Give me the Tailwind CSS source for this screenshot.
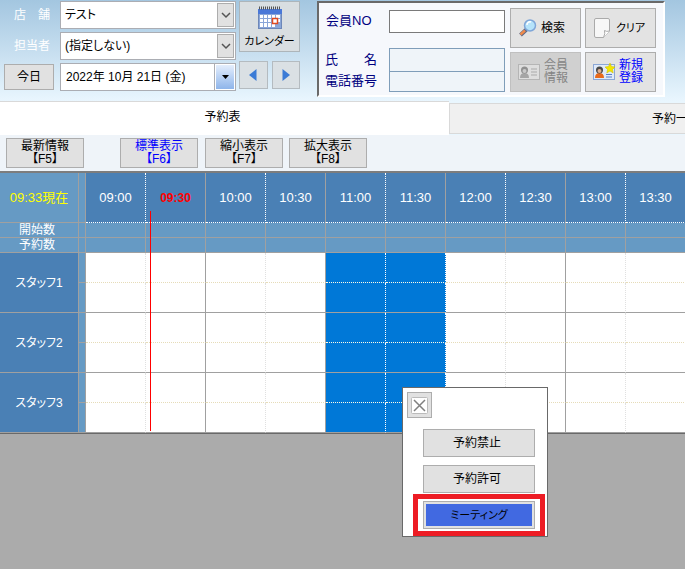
<!DOCTYPE html>
<html lang="ja">
<head>
<meta charset="utf-8">
<title>予約表</title>
<script src="https://cdn.jsdelivr.net/npm/@tailwindcss/browser@4"></script>
</head>
<body class="min-h-screen overflow-hidden bg-[#ababab] font-['Liberation_Sans','Noto_Sans_CJK_JP',sans-serif] text-xs text-black [font-feature-settings:'palt']">

<header class="flex h-[101px] items-start bg-linear-to-b from-[#a3c6e0] to-[#e9f6fe] pt-px">
  <div class="grid shrink-0 grid-cols-[50px_176px] gap-x-1.5 gap-y-[3px] pl-1">
    <label for="shop" class="self-center pl-2.5 text-white">店　舗</label>
    <div class="relative">
      <select id="shop" class="h-7 w-full appearance-none border border-[#abadb3] bg-white px-1 text-xs"><option>テスト</option></select>
      <span class="pointer-events-none absolute top-0.5 right-0.5 flex h-6 w-[17px] items-center justify-center border border-[#adadad] bg-[#e1e1e1]"><svg class="size-2.5" viewBox="0 0 10 10" fill="none" stroke="#555" stroke-width="1.500"><path d="M1 3l4 4 4-4"/></svg></span>
    </div>
    <label for="staff" class="self-center pl-2.5 text-white">担当者</label>
    <div class="relative">
      <select id="staff" class="h-7 w-full appearance-none border border-[#abadb3] bg-white px-1 text-xs"><option>(指定しない)</option></select>
      <span class="pointer-events-none absolute top-0.5 right-0.5 flex h-6 w-[17px] items-center justify-center border border-[#adadad] bg-[#e1e1e1]"><svg class="size-2.5" viewBox="0 0 10 10" fill="none" stroke="#555" stroke-width="1.500"><path d="M1 3l4 4 4-4"/></svg></span>
    </div>
    <button class="h-[26px] self-center border border-[#adadad] bg-[#e1e1e1]">今日</button>
    <div class="flex h-7">
      <input aria-label="日付" value="2022年 10月 21日 (金)" class="min-w-0 flex-1 border border-[#abadb3] bg-white px-[5px] text-xs">
      <button aria-label="日付を選択" class="flex w-[21px] border border-l-0 border-[#abadb3] bg-white p-px"><span class="flex h-full w-full items-center justify-center bg-linear-to-b from-[#e4eefc] to-[#8fb5ea]"><svg class="h-1 w-[7px]" viewBox="0 0 7 4"><path d="M0 0h7L3.500 4z"/></svg></span></button>
    </div>
  </div>

  <div class="ml-[3px] grid shrink-0 grid-cols-2 gap-x-1 gap-y-[9px]">
    <button class="col-span-2 flex h-[51px] w-[61px] flex-col items-center justify-between border border-[#adb5ba] bg-[#d9dee1] pt-1 pb-0.5">
      <svg class="h-6 w-[26px]" viewBox="0 0 26 24"><rect x="1" y="3" width="24" height="20" fill="#6d87b8"/><rect x="1" y="3" width="24" height="5" fill="#4a78d8"/><rect x="2" y="8" width="22" height="14" fill="#8aa6d8"/><g fill="#fff"><path d="M3 9h3v3H3zM7 9h3v3H7zM11 9h3v3h-3zM15 9h3v3h-3zM19 9h4v3h-4zM3 13h3v3H3zM7 13h3v3H7zM11 13h3v3h-3zM15 13h3v3h-3zM19 13h4v3h-4zM3 17h3v4H3zM7 17h3v4H7zM11 17h3v4h-3zM15 17h3v4h-3z"/></g><path d="M2 2h22" stroke="#555" stroke-width="3" stroke-dasharray="1 1"/><rect x="15.500" y="12.500" width="5" height="5" fill="#fff" stroke="#e04a20" stroke-width="1.500"/></svg>
      <span class="text-[11px] leading-4">カレンダー</span>
    </button>
    <button aria-label="前日" class="flex h-7 items-center justify-center border border-[#b4bbc0] bg-[#dae0e4]"><svg class="h-3 w-2" viewBox="0 0 8 12"><path d="M7.500 0v12L0 6z" fill="#3b7bd6"/></svg></button>
    <button aria-label="翌日" class="flex h-7 items-center justify-center border border-[#b4bbc0] bg-[#dae0e4]"><svg class="h-3 w-2" viewBox="0 0 8 12"><path d="M.500 0v12L8 6z" fill="#3b7bd6"/></svg></button>
  </div>

  <section class="ml-[17px] flex h-24 shrink-0 gap-[5px] border-2 border-t-[#696969] border-r-white border-b-white border-l-[#696969] bg-[#f6f8fc] pt-[5px] pr-[7px] pl-1.5 text-[13px] text-[#000080]">
    <div class="grid grid-cols-[64px_116px] grid-rows-[23px_39px_20px] content-start pt-0.5">
      <label for="no" class="pl-px leading-[22px]">会員NO</label>
      <input id="no" class="min-w-0 border border-[#7a7a7a] bg-white px-1">
      <label for="name" class="self-end leading-6">氏　　名</label>
      <input id="name" readonly class="h-6 min-w-0 self-end border border-[#7f9db9] bg-[#eff4f9] px-1">
      <label for="tel" class="leading-[18px]">電話番号</label>
      <input id="tel" readonly class="min-w-0 border border-t-0 border-[#7f9db9] bg-[#eff4f9] px-1">
    </div>
    <div class="grid grid-cols-[71px_71px] grid-rows-[40px_40px] content-start gap-x-1 gap-y-1 text-xs">
      <button class="flex items-center gap-1 border border-[#adadad] bg-[#e3e3e3] pl-2 text-black">
        <svg class="size-[18px]" viewBox="0 0 18 18"><path d="M1.500 16L8 10" stroke="#5b6684" stroke-width="4"/><path d="M1.500 15.500L6 11.500" stroke="#f08a4b" stroke-width="2.500"/><circle cx="11" cy="6.500" r="5.500" fill="#b5e3fa" stroke="#7fa6d8" stroke-width="1.500"/><path d="M8 6a3 3 0 0 1 4-3" stroke="#fff" stroke-width="1.500" fill="none"/></svg>検索
      </button>
      <button class="flex items-center gap-1.5 border border-[#adadad] bg-[#e3e3e3] pl-2 text-[11px] text-black">
        <svg class="h-5 w-4" viewBox="0 0 16 20"><path d="M2 .500h12q1.500 0 1.500 1.500v11l-6 6.500H2Q.500 19.500.500 18V2Q.500.500 2 .500z" fill="#f7f7f7" stroke="#aaa"/><path d="M15.500 13q-3 1-5-.500 1 3-1 7" fill="#fff" stroke="#aaa"/></svg>クリア
      </button>
      <button disabled class="flex items-center gap-1 border border-[#c0c0c0] bg-[#d0d0d0] pl-[7px] leading-[13px] text-[#848484]">
        <svg class="h-[18px] w-[22px]" viewBox="0 0 22 18"><rect x=".500" y="1.500" width="21" height="15" fill="#dedede" stroke="#b5b5b5"/><path d="M2 15q0-5 4.500-5t4.500 5z" fill="#a5a5a5"/><circle cx="6.500" cy="7" r="3.500" fill="#909090"/><circle cx="6.500" cy="8" r="2" fill="#c8c8c8"/><path d="M13 6h6M13 9h6M13 12h6" stroke="#aaa"/></svg>
        <span>会員<br>情報</span>
      </button>
      <button class="flex items-center gap-1 border border-[#adadad] bg-[#e3e3e3] pl-[7px] leading-[13px] text-[#0000ff]">
        <svg class="h-[18px] w-[22px]" viewBox="0 0 22 18"><rect x=".500" y="1.500" width="21" height="15" fill="#dfeafa" stroke="#8ba7d6"/><path d="M2 15q0-5 4.500-5t4.500 5z" fill="#e86a1c"/><circle cx="6.500" cy="7" r="3.500" fill="#4a4a4a"/><circle cx="6.500" cy="8" r="2" fill="#e0b090"/><path d="M13 11.500h6M13 14h6" stroke="#5a80c8"/><path d="M17 0l1.500 3.500 3.500.500-2.500 2.500.700 3.500-3.200-2-3.200 2 .700-3.500L12 4l3.500-.500z" fill="#f3e600" stroke="#c9b800" stroke-width=".500"/></svg>
        <span>新規<br>登録</span>
      </button>
    </div>
  </section>
</header>

<nav class="flex h-[34px] overflow-hidden bg-[#e9f6fe]">
  <button class="w-[449px] shrink-0 border-t border-[#d9d9d9] bg-white pr-1 pb-1">予約表</button>
  <button class="mt-0.5 mb-px flex-1 overflow-hidden border border-r-0 border-[#d9d9d9] bg-[#f0f0f0] pl-[202px] text-left whitespace-nowrap">予約一</button>
</nav>

<div class="flex h-9 items-start bg-[#eff4f9] pt-[3px] pl-1.5 leading-[13px]">
  <button class="h-[30px] w-[78px] border border-[#adadad] bg-[#e1e1e1]">最新情報<br>【F5】</button>
  <button class="ml-9 h-[30px] w-[78px] border border-[#adadad] bg-[#e1e1e1] text-[#0000ff]">標準表示<br>【F6】</button>
  <button class="ml-[7px] h-[30px] w-[78px] border border-[#adadad] bg-[#e1e1e1]">縮小表示<br>【F7】</button>
  <button class="ml-1.5 h-[30px] w-[78px] border border-[#adadad] bg-[#e1e1e1]">拡大表示<br>【F8】</button>
</div>

<main class="relative">
  <div class="overflow-hidden border-t-2 border-b border-t-[#7d7d7d] border-b-[#696969]">
  <table class="w-[686px] table-fixed border-separate border-spacing-0 text-center text-white [&_td]:border-r [&_td]:border-b [&_td]:border-[#a0a0a0] [&_td]:p-0 [&_th]:border-r [&_th]:border-b [&_th]:border-[#a0a0a0] [&_th]:p-0 [&_th]:font-normal">
    <colgroup><col class="w-[79px]"><col class="w-[7px]"><col span="10" class="w-[60px]"></colgroup>
    <thead id="head"></thead>
    <tbody id="rows"></tbody>
  </table>
  </div>
  <div class="absolute top-10 left-[150px] h-[220px] w-px bg-[#ff0000]"></div>

  <div role="dialog" aria-label="予約枠の設定" class="absolute top-[216px] left-[402px] w-[146px] border border-[#696969] bg-white pt-1 pb-[7px]">
    <button aria-label="閉じる" class="ml-1 flex h-[26px] w-[25px] items-center justify-center border border-[#adadad] bg-[#e1e1e1]"><svg class="size-[17px]" viewBox="0 0 17 17"><rect x=".500" y=".500" width="16" height="16" rx="1" fill="#fff" stroke="#bbb"/><path d="M3 3l11 11M14 3L3 14" stroke="#808080" stroke-width="1.500"/></svg></button>
    <div class="mt-[11px] flex flex-col gap-2 px-3 pl-5">
      <button class="h-7 border border-[#adadad] bg-[#e1e1e1] pr-1">予約禁止</button>
      <button class="h-7 border border-[#adadad] bg-[#e1e1e1] pr-1">予約許可</button>
      <button class="h-7 border border-[#adadad] bg-[#e1e1e1] p-0.5 text-[11px]"><span class="flex h-full items-center justify-center bg-[#4169e1]">ミーティング</span></button>
    </div>
    <div class="pointer-events-none absolute top-[106px] left-2.5 h-[42px] w-[132px] border-5 border-[#ed1c24]"></div>
  </div>
</main>

<script>
const times = ['09:00','09:30','10:00','10:30','11:00','11:30','12:00','12:30','13:00','13:30'];
const half = i => i % 2 === 0;
const selected = i => i === 4 || i === 5;

let head = '<tr><th class="h-[50px] bg-[#669ac4] text-[13px] text-[#ffff00]">09:33現在</th><td class="bg-[#669ac4]"></td>';
times.forEach((t, i) => {
  const line = half(i) ? '[border-right:1px_dotted_white!important]' : '';
  const now = t === '09:30' ? 'font-bold! text-xs text-[#ff0000]' : 'text-[13px]';
  head += `<th class="bg-[#4a80b5] [border-bottom:1px_dotted_white!important] ${line} ${now}">${t}</th>`;
});
head += '</tr>';
['開始数', '予約数'].forEach(n => {
  head += `<tr><th class="h-[15px] bg-[#669ac4] pr-1! leading-[14px]">${n}</th>` + '<td class="bg-[#669ac4]"></td>'.repeat(11) + '</tr>';
});
document.getElementById('head').innerHTML = head;

let body = '';
['スタッフ1', 'スタッフ2', 'スタッフ3'].forEach(n => {
  [0, 1].forEach(part => {
    body += '<tr>';
    if (part === 0) body += `<th rowspan="2" class="bg-[#4a80b5]">${n}</th>`;
    body += '<td class="h-[30px] bg-[#669ac4]"></td>';
    times.forEach((t, i) => {
      const s = selected(i);
      const bg = s ? 'bg-[#0078d7]' : 'bg-white';
      const right = s ? '[border-right:1px_dotted_white!important]' : half(i) ? '[border-right:1px_dotted_#e0e0e0!important]' : '';
      const bottom = part === 0 ? (s ? '[border-bottom:1px_dotted_#fffbe6!important]' : '[border-bottom:1px_dotted_#e6dcb8!important]') : '';
      body += `<td class="${bg} ${right} ${bottom}"></td>`;
    });
    body += '</tr>';
  });
});
document.getElementById('rows').innerHTML = body;
</script>
</body>
</html>
